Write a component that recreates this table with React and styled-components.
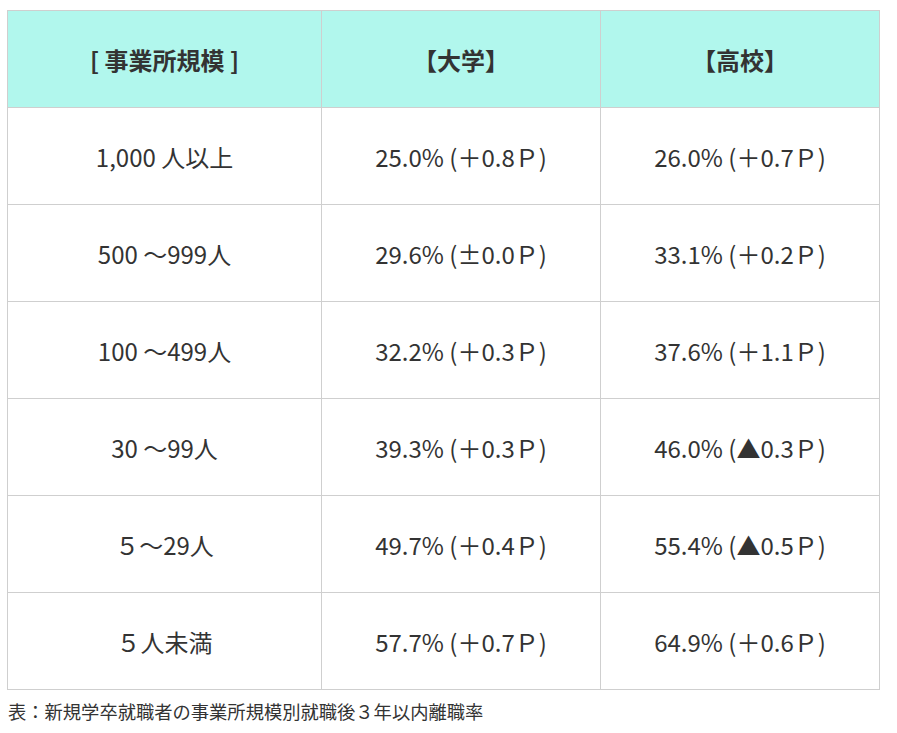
import React from 'react';
import styled, { createGlobalStyle } from 'styled-components';

const GlobalStyle = createGlobalStyle`
  body {
    margin: 0;
    background: #fff;
    font-family: "Noto Sans CJK JP", "Noto Sans", sans-serif;
    color: #333;
  }
`;

const rows = [
  ['1,000 人以上', '25.0% (＋0.8Ｐ)', '26.0% (＋0.7Ｐ)'],
  ['500 〜999人', '29.6% (±0.0Ｐ)', '33.1% (＋0.2Ｐ)'],
  ['100 〜499人', '32.2% (＋0.3Ｐ)', '37.6% (＋1.1Ｐ)'],
  ['30 〜99人', '39.3% (＋0.3Ｐ)', '46.0% (▲0.3Ｐ)'],
  ['５〜29人', '49.7% (＋0.4Ｐ)', '55.4% (▲0.5Ｐ)'],
  ['５人未満', '57.7% (＋0.7Ｐ)', '64.9% (＋0.6Ｐ)'],
];

const Wrapper = styled.div`
  padding: 10px 18px 0 7px;
`;

const Table = styled.table`
  width: 869px;
  border-collapse: collapse;
  table-layout: fixed;
`;

const HeadCell = styled.th`
  height: 96px;
  background: #b1f7ed;
  border: 1px solid #cfcfcf;
  font-size: 24px;
  font-weight: 700;
  color: #333;
  text-align: center;
  padding: 0;
  width: ${(p) => p.$w}px;
`;

const Cell = styled.td`
  height: 96px;
  border: 1px solid #cfcfcf;
  font-size: 24px;
  color: #333;
  text-align: center;
  padding: 0;
`;

const Caption = styled.p`
  margin: 8px 0 0 1px;
  font-size: 18.3px;
  color: #333;
`;

export default function App() {
  return (
    <>
      <GlobalStyle />
      <Wrapper>
        <Table>
          <thead>
            <tr>
              <HeadCell $w={313}>[ 事業所規模 ]</HeadCell>
              <HeadCell $w={278}>【大学】</HeadCell>
              <HeadCell $w={278}>【高校】</HeadCell>
            </tr>
          </thead>
          <tbody>
            {rows.map((r) => (
              <tr key={r[0]}>
                {r.map((c, i) => (
                  <Cell key={i}>{c}</Cell>
                ))}
              </tr>
            ))}
          </tbody>
        </Table>
        <Caption>表：新規学卒就職者の事業所規模別就職後３年以内離職率</Caption>
      </Wrapper>
    </>
  );
}
